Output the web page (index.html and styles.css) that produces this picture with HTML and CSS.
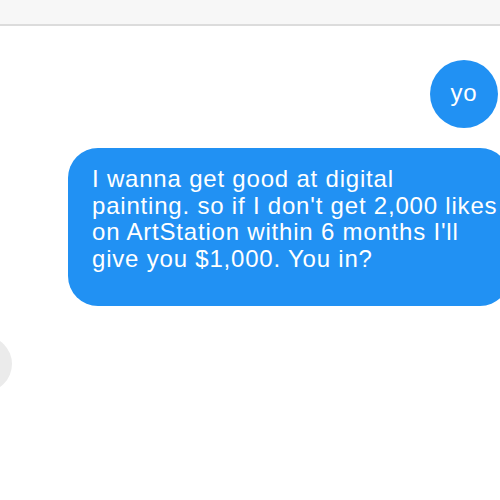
FILE: index.html
```html
<!DOCTYPE html>
<html lang="en">
<head>
  <meta charset="UTF-8" />
  <meta name="viewport" content="width=device-width, initial-scale=1.0"/>
  <title>Chat</title>
  <link rel="stylesheet" href="styles.css">
</head>
<body>

  <!-- Верхняя панель -->
  <div class="topbar"></div>

  <!-- Сообщения -->
  <div class="thread">
    <div class="bubble bubble-short">yo</div>
    <div class="bubble bubble-long">I wanna get good at digital<br>painting. so if I don't get 2,000 likes<br>on ArtStation within 6 months I'll<br>give you $1,000. You in?</div>
    <div class="incoming">
      <div class="avatar"></div>
    </div>
  </div>

</body>
</html>
```

FILE: styles.css
```css
body {
  margin: 0;
  overflow: hidden;
  background: #fff;
  font-family: "Liberation Sans", Arial, sans-serif;
}
.topbar {
  height: 24px;
  background: #f7f7f7;
  border-bottom: 2px solid #dcdcdc;
}
.thread {
  display: flex;
  flex-direction: column;
  align-items: flex-end;
}
.bubble {
  background: #2191f3;
  color: #fff;
  font-size: 24px;
  letter-spacing: 0.8px;
}
.bubble-short {
  margin-top: 34px;
  margin-right: 2px;
  width: 68px;
  height: 68px;
  border-radius: 34px;
  display: flex;
  justify-content: center;
  align-items: center;
  padding-bottom: 2px;
  box-sizing: border-box;
}
.bubble-long {
  margin-top: 20px;
  margin-right: -10px;
  width: 442px;
  padding: 18px 6px 34px 24px;
  box-sizing: border-box;
  border-radius: 30px;
  line-height: 26.5px;
  white-space: nowrap;
}
.incoming {
  align-self: flex-start;
  margin-top: 30px;
}
.avatar {
  width: 56px;
  height: 56px;
  margin-left: -44px;
  border-radius: 50%;
  background: #ebebeb;
}
```
